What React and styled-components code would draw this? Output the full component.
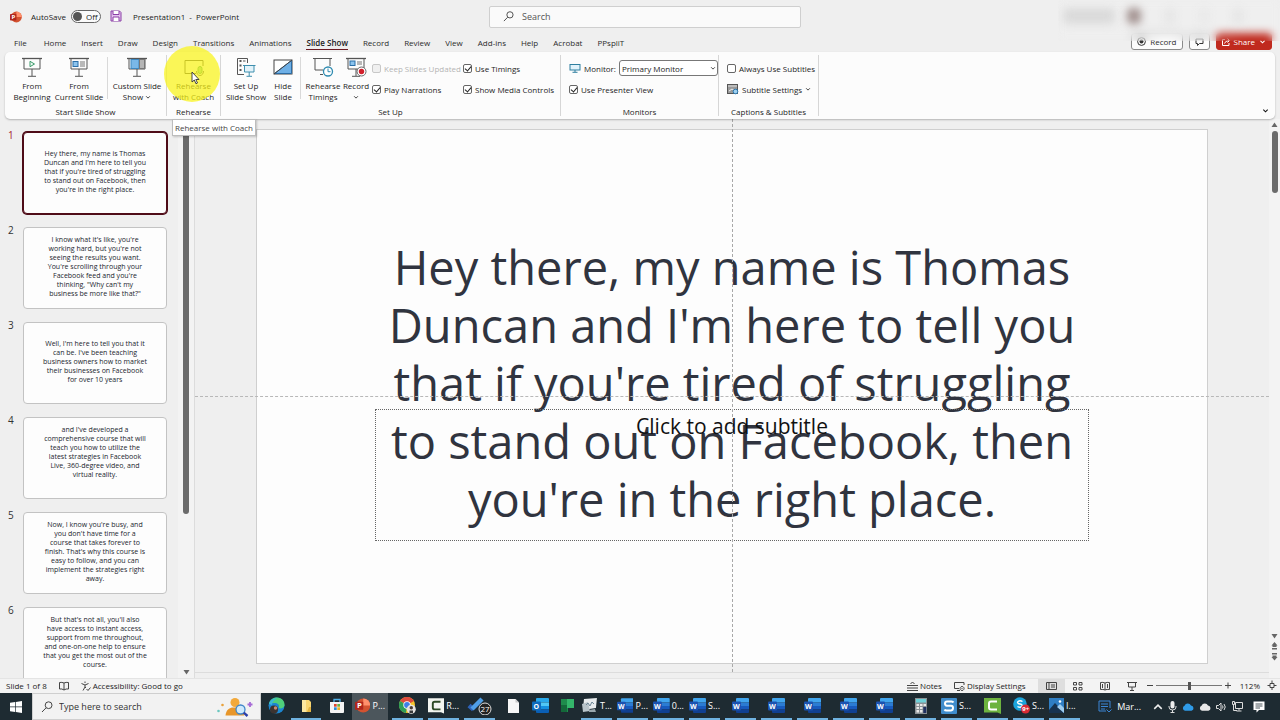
import React from 'react';
import styled, { createGlobalStyle, css } from 'styled-components';

const GlobalStyle = createGlobalStyle`
*{
  box-sizing: border-box;
}
body{
  margin: 0;
  background-color: #efefef;
}
button, input, select{
  font-family: inherit;
  font-size: inherit;
  color: inherit;
}
button{
  border: none;
  background: none;
  padding: 0;
}
`

const Window = styled.div`
height: 100vh;
display: flex;
flex-direction: column;
overflow: hidden;
position: relative;
font-family: "Open Sans", "Noto Sans", sans-serif;
font-size: 8px;
line-height: 11px;
color: #1c1c1c;
background-color: #efefef;
white-space: nowrap;
`

/* title bar */

const TitleBar = styled.header`
flex: none;
height: 33px;
padding-left: 10px;
display: grid;
grid-template-columns: 1fr minmax(120px, 312px) 1fr;
align-items: center;
`

const TitleLeft = styled.div`
display: flex;
align-items: center;
gap: 9px;
`

const AutoSave = styled.div`
display: flex;
align-items: center;
gap: 5px;
`

const Toggle = styled.button`
display: flex;
align-items: center;
gap: 4px;
width: 30px;
height: 13px;
padding: 0 1px;
border: 1px solid #666;
border-radius: 7px;
background-color: #fbfbfb;

&::before{
  content: "";
  width: 9px;
  height: 9px;
  border-radius: 50%;
  background-color: #555;
}
`

const DocTitle = styled.h1`
margin: 0 0 0 2px;
font-size: 8px;
font-weight: 400;
white-space: pre;
`

const SearchBox = styled.label`
display: flex;
align-items: center;
gap: 8px;
height: 22px;
padding-left: 13px;
border: 1px solid #cfcfcf;
border-radius: 2px;
background-color: #fafafa;
font-size: 9px;

input{
  flex: 1;
  min-width: 0;
  border: none;
  outline: none;
  background: none;
  padding: 0;
}
input::placeholder{
  color: #555;
}
`

const Veil = styled.div`
position: absolute;
top: 0;
right: 0;
width: 222px;
height: 41px;
padding: 8px 10px 0 5px;
display: flex;
gap: 24px;
backdrop-filter: blur(4px);
overflow: hidden;
z-index: 2;
`

const Smudge = styled.span`
width: ${(p) => p.$w}px;
height: 16px;
margin-left: ${(p) => (p.$near ? -12 : 0)}px;
border-radius: 5px;
background-color: ${(p) => p.$color};
filter: blur(4px);
`

/* tabs */

const TabRow = styled.div`
flex: none;
height: 19px;
padding: 0 8px 0 14px;
display: flex;
align-items: flex-start;
justify-content: space-between;
`

const Tabs = styled.nav`
display: flex;
gap: 15px;
padding-top: 4px;
`

const Tab = styled.a`
padding-bottom: 1px;
color: #2b2b2b;
text-decoration: none;
border-bottom: 1px solid transparent;

&:first-child{
  margin-right: 2px;
}

${(p) => p.$active && css`
  color: #222;
  font-weight: 600;
  border-color: #6b1a22;
`}
`

const TabActions = styled.div`
display: flex;
gap: 6px;
`

const ActionButton = styled.button`
display: flex;
align-items: center;
justify-content: center;
gap: 4px;
height: 17px;
padding: 0 5px;
border: 1px solid ${(p) => (p.$red ? '#c02a1e' : '#8a8a8a')};
border-radius: 3px;
background-color: ${(p) => (p.$red ? '#c02a1e' : '#fcfcfc')};
color: ${(p) => (p.$red ? '#fff' : '#2b2b2b')};
`

/* ribbon */

const Ribbon = styled.section`
flex: none;
position: relative;
height: 67px;
margin: 0 5px;
padding-top: 3px;
display: flex;
border-radius: 5px;
background-color: #fcfcfc;
box-shadow: 0 1px 2px rgba(0, 0, 0, 0.25);
z-index: 1;
`

const Group = styled.div`
flex: none;
width: ${(p) => p.$w}px;
height: 61px;
display: flex;
flex-direction: column;
border-right: 1px solid #d6d6d6;
`

const GroupBody = styled.div`
flex: 1;
display: flex;
align-items: flex-start;
justify-content: ${(p) => (p.$center ? 'center' : 'flex-start')};
gap: 5px;
padding: 2px 0 0 ${(p) => p.$pad || 0}px;
`

const GroupLabel = styled.div`
text-align: center;
line-height: 9px;
`

const Separator = styled.span`
width: 1px;
height: 42px;
background-color: #d9d9d9;
`

const BigButton = styled.button`
flex: none;
position: relative;
width: ${(p) => p.$w}px;
display: flex;
flex-direction: column;
align-items: center;
gap: 3px;
line-height: 11px;
text-align: center;
`

const Caption = styled.span`
display: flex;
flex-direction: column;
align-items: center;
`

const Spot = styled.span`
position: absolute;
left: 50%;
top: -11px;
width: 56px;
height: 56px;
margin-left: -30px;
border-radius: 50%;
background-color: rgba(249, 244, 24, 0.72);
`

const Pointer = styled.svg`
position: absolute;
left: 50%;
top: 14px;
margin-left: -3px;
`

const Tooltip = styled.div`
position: absolute;
left: 167px;
top: 67px;
padding: 2px 2px;
border: 1px solid #bdbdbd;
background-color: #fff;
color: #444;
box-shadow: 1px 1px 2px rgba(0, 0, 0, 0.2);
`

const Fields = styled.div`
display: grid;
grid-template-columns: ${(p) => p.$cols || 'auto'};
grid-auto-rows: 16px;
row-gap: 5px;
column-gap: 5px;
align-items: center;
padding-top: 3px;
`

const CheckLabel = styled.label`
display: flex;
align-items: center;
gap: 3px;
color: ${(p) => (p.$off ? '#b4b4b4' : '#1c1c1c')};
`

const Tick = styled.input`
appearance: none;
flex: none;
position: relative;
width: 9px;
height: 9px;
margin: 0;
border: 1px solid #666;
border-radius: 2px;
background-color: #fff;

&:checked::after{
  content: "";
  position: absolute;
  left: 2px;
  top: 0;
  width: 3px;
  height: 5px;
  border: solid #222;
  border-width: 0 1px 1px 0;
  transform: rotate(40deg);
}
&:disabled{
  border-color: #c8c8c8;
  background-color: #f0f0f0;
}
`

const SelectWrap = styled.span`
position: relative;
display: flex;
align-items: center;

svg{
  position: absolute;
  right: 2px;
  pointer-events: none;
}
`

const Select = styled.select`
appearance: none;
width: 99px;
height: 16px;
padding: 0 10px 0 2px;
border: 1px solid #777;
border-radius: 3px;
background-color: #fff;
`

const TextButton = styled.button`
display: flex;
align-items: center;
gap: 3px;
`

const Collapse = styled.button`
margin-left: auto;
align-self: flex-end;
padding: 0 6px 3px 0;
`

/* body */

const Main = styled.main`
flex: 1;
min-height: 0;
display: flex;
`

const SidePane = styled.aside`
flex: none;
width: 195px;
display: flex;
border-right: 1px solid #dcdcdc;
`

const Thumbs = styled.ol`
flex: 1;
margin: 0;
padding: 13px 0 0 8px;
display: flex;
flex-direction: column;
gap: 13px;
list-style: none;
overflow: hidden;
`

const ThumbItem = styled.li`
flex: none;
display: flex;
gap: 7px;
font-size: 10px;
color: ${(p) => (p.$active ? '#a4262c' : '#333')};

span{
  width: 8px;
  line-height: 7px;
}
`

const Thumb = styled.div`
width: 144px;
height: 82px;
padding-bottom: ${(p) => (p.$raised ? 12 : 3)}px;
display: flex;
flex-direction: column;
justify-content: center;
border-radius: 4px;
border: 1px solid #c3c3c3;
background-color: #fdfdfd;
font-size: 7px;
line-height: 9px;
text-align: center;
color: #22252e;

${(p) => p.$active && css`
  border-color: #4f0c18;
  box-shadow: 0 0 0 1px #4f0c18;
`}
`

const Scroll = styled.div`
flex: none;
width: ${(p) => p.$w}px;
padding: ${(p) => p.$top}px 0 ${(p) => p.$bottom}px;
display: flex;
flex-direction: column;
align-items: center;
gap: 3px;
background-color: #f3f3f3;

i{
  width: 6px;
  height: ${(p) => p.$len};
  margin-bottom: auto;
  border-radius: 3px;
  background-color: #6b6b6b;
}
`

const Stage = styled.section`
flex: 1;
min-width: 0;
position: relative;
padding: 10px 61px 8px;
display: flex;
border-bottom: 1px solid #dcdcdc;
margin-bottom: 5px;
`

const Slide = styled.article`
flex: 1;
position: relative;
padding-top: 108px;
border: 1px solid #cfcfcf;
background-color: #fdfdfd;
`

const SlideTitle = styled.h2`
margin: 0;
display: flex;
flex-direction: column;
align-items: center;
font-size: 47px;
line-height: 58px;
font-weight: 400;
color: #30343f;
`

const Subtitle = styled.div`
position: absolute;
left: 12.4%;
right: 12.4%;
top: 279px;
height: 132px;
padding-top: 4px;
border: 1px dotted #666;
font-size: 21px;
line-height: 25px;
text-align: center;
color: #111;
`

const GuideV = styled.div`
position: absolute;
left: 50%;
top: 0;
bottom: 0;
border-left: 1px dashed #a8a8a8;
`

const GuideH = styled.div`
position: absolute;
left: 0;
right: 0;
top: 50%;
border-top: 1px dashed #b8b8b8;
`

/* status bar */

const StatusBar = styled.footer`
flex: none;
height: 15px;
padding: 0 3px 1px 6px;
display: flex;
align-items: center;
background-color: #f3f3f3;
border-top: 1px solid #e4e4e4;
`

const StatusItem = styled.button`
display: flex;
align-items: center;
gap: 2px;
margin-right: ${(p) => p.$gap || 12}px;
`

const ZoomLevel = styled(StatusItem)`
margin-left: 8px;
`

const Spacer = styled.span`
flex: 1;
`

const ViewButton = styled.button`
width: 27px;
height: 14px;
display: flex;
align-items: center;
justify-content: center;
background-color: ${(p) => (p.$active ? '#dedede' : 'transparent')};
`

const Zoom = styled.input`
appearance: none;
width: 66px;
height: 10px;
margin: 0 2px;
background: linear-gradient(#777, #777) center / 100% 1px no-repeat;

&::-webkit-slider-thumb{
  appearance: none;
  width: 3px;
  height: 8px;
  background-color: #555;
}
`

/* taskbar */

const Taskbar = styled.footer`
flex: none;
height: 27px;
display: flex;
background-color: #1e2b32;
color: #fff;
font-size: 9px;
`

const Start = styled.button`
width: 32px;
display: flex;
align-items: center;
justify-content: center;
`

const TaskSearch = styled.label`
width: 229px;
padding: 0 6px 0 8px;
display: flex;
align-items: center;
gap: 6px;
border: 1px solid #cfcfcf;
background-color: #f2f2f2;

input{
  flex: 1;
  min-width: 0;
  border: none;
  outline: none;
  padding: 0;
  background: none;
}
input::placeholder{
  color: #333;
}
`

const Task = styled.button`
width: ${(p) => p.$w || 31}px;
margin-right: ${(p) => (p.$active ? 4 : p.$w ? 0 : 5)}px;
display: flex;
align-items: center;
justify-content: ${(p) => (p.$text ? 'flex-start' : 'center')};
gap: 2px;
border-bottom: 2px solid ${(p) => (p.$open ? '#6fb2e0' : 'transparent')};
background-color: ${(p) => (p.$active ? '#4c565c' : 'transparent')};
padding: 0 ${(p) => (p.$active ? 3 : 0)}px;
`

const Tray = styled.div`
margin-left: auto;
padding-right: 15px;
display: flex;
align-items: center;
gap: 5px;

b{
  font-weight: 400;
  margin-right: 7px;
}
svg:last-child{
  margin-left: 5px;
}
`

/* icons */

const Chevron = ({ size = 7, color = '#333', up }) => (
  <svg width={size} height={size} viewBox="0 0 8 8" fill="none" stroke={color} strokeWidth="1.2">
    <path d={up ? 'M1 5.5 4 2.5 7 5.5' : 'M1.5 3 4 5.5 6.5 3'} />
  </svg>
)

const Glass = ({ size = 11 }) => (
  <svg width={size} height={size} viewBox="0 0 12 12" fill="none" stroke="#444" strokeWidth="1">
    <circle cx="7.6" cy="4.2" r="3.4" />
    <path d="M5.1 6.8 1 11" />
  </svg>
)

const Screen = ({ children }) => (
  <svg width="22" height="20" viewBox="0 0 22 20" fill="none" stroke="#555">
    <path d="M1 1.5H21" strokeWidth="1.3" />
    <path d="M3 2V12H19V2M11 12V19M7 19.3H15" />
    {children}
  </svg>
)

const FromStart = () => (
  <Screen><path d="M9 4.3V9.7L13.5 7Z" stroke="#3a9a6a" fill="#eef9f2" /></Screen>
)

const FromCurrent = () => (
  <Screen>
    <rect x="5" y="4.5" width="5" height="5" fill="#8cc4ee" stroke="#2b6fa8" />
    <path d="M12 5H17M12 7H17M12 9H17" stroke="#777" />
  </Screen>
)

const CustomShow = () => (
  <Screen>
    <rect x="5" y="2.5" width="8" height="9" fill="#7ab8e8" stroke="#3d87c0" />
    <rect x="13.5" y="2.5" width="5" height="9" fill="#b5b5b5" stroke="#777" />
  </Screen>
)

const Coach = () => (
  <svg width="22" height="20" viewBox="0 0 22 20" fill="none" stroke="#444">
    <path d="M13 16.5H2V3.5H20V9" />
    <rect x="15" y="9.5" width="4" height="7" rx="2" fill="#8fd0a0" stroke="#3a9a6a" />
    <path d="M13.5 14C13.5 20 20.5 20 20.5 14" stroke="#555" />
  </svg>
)

const SetUp = () => (
  <svg width="20" height="20" viewBox="0 0 20 20" fill="none" stroke="#555">
    <path d="M8 17.5H1.5V1.5H11.5V6" />
    <path d="M3.5 4H5.5M3.5 8.5H5.5M3.5 13H5.5" strokeWidth="2" />
    <path d="M7 4H9.5" />
    <path d="M8.500 8.500V15H18V8.500Z" fill="#e3f3fa" stroke="none" />
    <path d="M7 8.5H19.500M8.500 8.500V15H18V8.500M13.200 15V19M10.500 19.300H16" stroke="#3f8fae" />
  </svg>
)

const Hide = () => (
  <svg width="20" height="20" viewBox="0 0 20 20">
    <rect x="1" y="3" width="18" height="14" fill="#fff" stroke="#444" />
    <path d="M18.5 3.5V16.5H1.5Z" fill="#6fb0e6" stroke="#2d6ca3" />
    <path d="M1 17 19 3" stroke="#444" />
  </svg>
)

const Timings = () => (
  <svg width="22" height="20" viewBox="0 0 22 20" fill="none" stroke="#555">
    <path d="M1 1.5H20M3 2V13H11M18 2V9M8 17.5H11" />
    <circle cx="16" cy="14.5" r="4.5" fill="#fff" stroke="#2f8bb0" strokeWidth="1.3" />
    <path d="M16 11.5V14.7H18.5" stroke="#2f8bb0" />
  </svg>
)

const RecordShow = () => (
  <Screen>
    <rect x="5" y="4" width="5" height="4.5" fill="#8cc4ee" stroke="#2b6fa8" />
    <path d="M12 5H17M12 7H17" stroke="#777" />
    <circle cx="16.5" cy="14.5" r="4.5" fill="#fff" stroke="#666" />
    <circle cx="16.5" cy="14.5" r="2.7" fill="#d21f2b" stroke="none" />
  </Screen>
)

const MonitorIcon = () => (
  <svg width="12" height="10" viewBox="0 0 11 10" fill="#e2f3fb" stroke="#2f7f9f">
    <rect x=".5" y="1.5" width="10" height="5.5" />
    <path d="M5.5 7V9M3 9.3H8" />
  </svg>
)

const SubtitleIcon = () => (
  <svg width="12" height="11" viewBox="0 0 12 11">
    <rect x=".5" y=".5" width="10" height="9" fill="#9a9a9a" stroke="#555" />
    <path d="M1 2H10" stroke="#ddd" />
    <path d="M2 7 5 5 8 7" stroke="#eee" fill="none" />
    <circle cx="8.5" cy="7.5" r="2.3" fill="#9fd0f0" stroke="#2a78b0" />
  </svg>
)

const PptLogo = ({ size = 12 }) => (
  <svg width={size} height={size} viewBox="0 0 16 16">
    <circle cx="8.5" cy="8" r="7.3" fill="#d35230" />
    <path d="M8.5 .7A7.3 7.3 0 0 1 15.8 8H8.5Z" fill="#ff8f6b" />
    <rect x="0" y="4" width="8.5" height="8.5" rx="1" fill="#b0261c" />
    <text x="2" y="11" fontSize="8" fontWeight="700" fill="#fff">P</text>
  </svg>
)

const Save = () => (
  <svg width="12" height="12" viewBox="0 0 12 12" fill="none" stroke="#8a3fa6">
    <path d="M1 1H9.5L11 2.5V11H1Z" fill="#e4c4ee" />
    <path d="M3 1V4.5H9V1M3 11V7H9V11" fill="#fff" />
  </svg>
)

const Tri = ({ up, stem }) => (
  <svg width="7" height={stem ? 8 : 6} viewBox={stem ? '0 0 7 8' : '0 0 7 6'} fill="#666">
    {stem
      ? <path d={up ? 'M3.5 0 6.5 3.5H5.5V5H1.5V3.500H.5ZM1 6H6V7.500H1Z' : 'M1 0H6V1.500H1ZM1.500 2.500H5.500V4H6.500L3.500 7.500.5 4H1.500Z'} />
      : <path d={up ? 'M3.5 .5 6.5 5H.5Z' : 'M3.5 5.5 6.5 1H.5Z'} />}
  </svg>
)

const WinLogo = () => (
  <svg width="12" height="12" viewBox="0 0 12 12" fill="#fff">
    <path d="M0 1.7 5.2 1V5.6H0ZM5.9 .9 12 0V5.6H5.9ZM0 6.3H5.2V11L0 10.3ZM5.9 6.3H12V12L5.9 11.1Z" />
  </svg>
)

const SearchBuddy = () => (
  <svg width="38" height="20" viewBox="0 0 38 20">
    <circle cx="19" cy="5.5" r="4.5" fill="#f2a93b" />
    <path d="M9.5 18.5C10 12.5 14 10.5 17 10.5H21C25 11 28 13 28 18.5Z" fill="#e8962a" />
    <circle cx="24.5" cy="12.5" r="4.5" fill="#cfeafc" stroke="#3f86c9" strokeWidth="1.3" />
    <path d="M27.7 15.7 31.5 19" stroke="#2b3fa8" strokeWidth="2.4" />
    <path d="M34 5V10M31.500 7.500H36.500" stroke="#a76bd6" strokeWidth="1.8" />
    <circle cx="6.5" cy="8" r="1.3" fill="#e9a13b" />
    <circle cx="2.5" cy="14" r="1.3" fill="#6bc7c0" />
  </svg>
)

const Edge = () => (
  <svg width="17" height="17" viewBox="0 0 17 17">
    <circle cx="8.5" cy="8.5" r="8" fill="#1c86d1" />
    <path d="M1 7C2 2 6 .5 9 .5C14 .7 17 4.5 16.5 8.5C16 11.5 12 12 10.5 11C12 8.5 10 6 7 6C4 6 2 6.5 1 7Z" fill="#4fcf7b" />
    <path d="M1 7C2.5 2.5 6 1 9 1.5C6 3 4 5 4 8Z" fill="#39b8d8" />
    <circle cx="6" cy="12.5" r="4" fill="#3c3330" />
    <circle cx="7.5" cy="11" r="1.7" fill="#c58a70" />
  </svg>
)

const Folder = () => (
  <svg width="11" height="14" viewBox="0 0 11 14">
    <path d="M1 1H8L10 3V13H1Z" fill="#f7d572" />
    <path d="M1 1H5V13H1Z" fill="#fbe7a1" />
    <path d="M8 8H10V13H6Z" fill="#e3b341" />
  </svg>
)

const Store = () => (
  <svg width="16" height="16" viewBox="0 0 16 16">
    <path d="M5 4V1.5H11V4" fill="none" stroke="#4fb0e8" strokeWidth="1.3" />
    <path d="M1 4H15V14Q15 15 14 15H2Q1 15 1 14Z" fill="#f4f4f4" />
    <path d="M5 6H7.7V8.7H5Z" fill="#e0452c" />
    <path d="M8.3 6H11V8.7H8.3Z" fill="#6cb33f" />
    <path d="M5 9.3H7.7V12H5Z" fill="#2a8fd8" />
    <path d="M8.3 9.3H11V12H8.3Z" fill="#f0b323" />
  </svg>
)

const Chrome = () => (
  <svg width="17" height="17" viewBox="0 0 17 17">
    <circle cx="8" cy="8" r="8" fill="#f7c52b" />
    <path d="M8 8 1 4A8 8 0 0 1 15 4Z" fill="#dd4b3e" />
    <path d="M8 8 1 4A8 8 0 0 0 7 16Z" fill="#2f9e57" />
    <circle cx="8" cy="8" r="3.7" fill="#fff" />
    <circle cx="8" cy="8" r="2.9" fill="#3f7fe8" />
    <circle cx="12.3" cy="12.3" r="4.5" fill="#e6e3e0" />
    <circle cx="12.3" cy="10.7" r="1.7" fill="#4a3a33" />
    <path d="M10.5 16V13.5H14V16Z" fill="#3a3a3a" />
  </svg>
)

const Camtasia = ({ green }) => (
  <svg width="17" height="16" viewBox="0 0 17 16">
    <path d="M0 0H17V16L13.5 14.5H0Z" fill={green ? '#6db33f' : '#f3f5f0'} />
    <path d="M12 4.5V3.5H7Q5 3.5 5 5.5V9.5Q5 11.5 7 11.5H12V10.5" fill="none" stroke={green ? '#fff' : '#2d4a24'} strokeWidth="2" />
  </svg>
)

const Todo = () => (
  <svg width="25" height="18" viewBox="0 0 25 18">
    <path d="M2 8.5 6.5 12.5" stroke="#2d62b8" strokeWidth="4.5" />
    <path d="M5 12 15 2" stroke="#4f9fe8" strokeWidth="4.5" />
    <circle cx="18" cy="12" r="6" fill="#222" stroke="#ddd" />
    <text x="13.5" y="15" fontSize="8" fill="#fff">27</text>
  </svg>
)

const FileIcon = () => (
  <svg width="11" height="14" viewBox="0 0 11 14">
    <path d="M0 0H7.5L11 3.5V14H0Z" fill="#f7f7f7" />
    <path d="M7.5 0V3.5H11Z" fill="#c8c8c8" />
  </svg>
)

const OfficeTile = ({ letter }) => (
  <svg width="17" height="16" viewBox="0 0 17 16">
    <path d="M4 1Q4 0 5 0H16Q17 0 17 1V4.5H4Z" fill={letter === 'O' ? '#28a8ea' : '#41a5ee'} />
    <path d="M4 4.5H17V8H4Z" fill={letter === 'O' ? '#50c8f5' : '#2b7cd3'} />
    <path d="M4 8H17V11.5H4Z" fill={letter === 'O' ? '#1490df' : '#185abd'} />
    <path d="M4 11.5H17V14Q17 15 16 15H5Q4 15 4 14Z" fill={letter === 'O' ? '#0a5fb5' : '#103f91'} />
    <rect x="0" y="3.5" width="9" height="9" rx="1" fill={letter === 'O' ? '#0f6cbd' : '#1b52b0'} />
    <text x={letter === 'O' ? 1.5 : 1} y="10.7" fontSize="7" fontWeight="700" fill="#fff">{letter}</text>
  </svg>
)

const Planner = () => (
  <svg width="13" height="14" viewBox="0 0 13 14">
    <path d="M0 0H7V13H0Z" fill="#1f8b4c" />
    <path d="M6 0H13V9H6Z" fill="#34b56a" />
    <path d="M0 6H6V13H0Z" fill="#14683a" />
  </svg>
)

const Tasks = () => (
  <svg width="17" height="15" viewBox="0 0 17 15">
    <path d="M3 1 16 0 15 10 2 12Z" fill="#e8ecee" />
    <path d="M1 6 7 4 9 13 2 14Z" fill="#b8c4ca" />
    <path d="M5 7 7 5 9 8 11 4 13 6" fill="none" stroke="#6b8696" />
    <path d="M8 12 14 11 15 14H8Z" fill="#9aa7ad" />
  </svg>
)

const Calculator = () => (
  <svg width="12" height="16" viewBox="0 0 12 16">
    <rect width="12" height="16" fill="#8b9296" />
    <rect x="1" y="1" width="10" height="3.5" fill="#6fd0d8" />
    <path d="M1.5 6H4V8H1.5ZM5 6H7.5V8H5ZM8.5 6H11V8H8.5ZM1.5 9H4V11H1.5ZM5 9H7.5V11H5ZM1.5 12H4V14.5H1.5ZM5 12H7.5V14.5H5Z" fill="#e8e8e8" />
    <rect x="8.3" y="9" width="3" height="6" fill="#1f3060" />
  </svg>
)

const Snagit = () => (
  <svg width="16" height="16" viewBox="0 0 16 16">
    <rect width="16" height="16" rx="1" fill="#3f8ccc" />
    <path d="M12.5 4.5Q12 3.5 10.5 3.5H6Q4 3.5 4 5.5T6 7.8H10Q12 7.8 12 10T10 12.5H5.5Q4 12.5 3.5 11.5" fill="none" stroke="#fff" strokeWidth="2" />
  </svg>
)

const Skype = () => (
  <svg width="17" height="17" viewBox="0 0 17 17">
    <circle cx="7" cy="7" r="6.8" fill="#1ba5dc" />
    <path d="M9.5 4.5Q7 3 5 4.5C3.8 6 5.5 7 7 7S10 8.5 9 9.7Q7 11 4.5 9.5" fill="none" stroke="#fff" strokeWidth="1.4" />
    <circle cx="12.5" cy="12" r="4.5" fill="#d92b35" />
    <text x="9.3" y="14.5" fontSize="6" fontWeight="700" fill="#fff">9+</text>
  </svg>
)

const Photos = () => (
  <svg width="15" height="15" viewBox="0 0 15 15">
    <rect width="15" height="15" fill="#2f7ec4" />
    <path d="M0 12 6 5 15 15H0Z" fill="#17324f" />
    <path d="M8 9 11 6 15 10V15Z" fill="#9dccf0" />
    <circle cx="11" cy="3.5" r="1.3" fill="#fff" />
  </svg>
)

const News = () => (
  <svg width="14" height="13" viewBox="0 0 14 13" fill="none" stroke="#3b86d6">
    <path d="M1 1H12V8M8 11H1V1M3 4H10M3 6.5H10M3 9H7" />
    <path d="M8.5 9.5 11 12 13.5 9.5" />
  </svg>
)

const Mic = () => (
  <svg width="9" height="12" viewBox="0 0 9 12">
    <rect x="2.5" y="0" width="4" height="7.5" rx="2" fill="#eee" />
    <path d="M1 5V6Q1 9 4.5 9T8 6V5M4.5 9V11.5M2.5 11.5H6.5" fill="none" stroke="#ddd" />
  </svg>
)

const Cloud = ({ color }) => (
  <svg width="12" height="8" viewBox="0 0 12 8">
    <path d="M3 7.8A2.7 2.7 0 0 1 2.5 2.7A3.6 3.6 0 0 1 9 2.5A2.7 2.7 0 0 1 9.5 7.8Z" fill={color} />
  </svg>
)

const Speaker = () => (
  <svg width="11" height="10" viewBox="0 0 11 10" fill="none" stroke="#ddd">
    <path d="M.5 3.5H2.5L5 1V9L2.5 6.5H.5ZM6.5 3.5Q7.5 5 6.5 6.5M8 2Q10.5 5 8 8" />
  </svg>
)

const Network = () => (
  <svg width="11" height="11" viewBox="0 0 11 11" fill="none" stroke="#ddd">
    <path d="M3.5 1.5H10.5V7.5H3.5ZM7 7.5V9.5M4.5 10H9.5M.5 .5H2.5V3.5H.5ZM1.5 3.5V9.5H5" />
  </svg>
)

const Notice = () => (
  <svg width="12" height="12" viewBox="0 0 12 12">
    <path d="M.5 .5H11.5V9H6L3.5 11.5V9H.5Z" fill="#fff" />
    <path d="M2.5 3H9.5M2.5 5H9.5M2.5 7H7" stroke="#1e2b32" strokeWidth=".8" />
  </svg>
)

const LineIcon = ({ w = 10, d }) => (
  <svg width={w} height="10" viewBox={`0 0 ${w} 10`} fill="none" stroke="#444">
    <path d={d} />
  </svg>
)

/* data */

const tabs = ['File', 'Home', 'Insert', 'Draw', 'Design', 'Transitions', 'Animations', 'Slide Show', 'Record', 'Review', 'View', 'Add-ins', 'Help', 'Acrobat', 'PPspliT'];

const title = ['Hey there, my name is Thomas', "Duncan and I'm here to tell you", "that if you're tired of struggling", 'to stand out on Facebook, then', "you're in the right place."];

const slides = [
  { lines: title },
  { lines: ["I know what it's like, you're", "working hard, but you're not", 'seeing the results you want.', "You're scrolling through your", "Facebook feed and you're", 'thinking, "Why can\'t my', 'business be more like that?"'] },
  { lines: ["Well, I'm here to tell you that it", "can be. I've been teaching", 'business owners how to market', 'their businesses on Facebook', 'for over 10 years'] },
  { raised: true, lines: ["and I've developed a", 'comprehensive course that will', 'teach you how to utilize the', 'latest strategies in Facebook', 'Live, 360-degree video, and', 'virtual reality.'] },
  { lines: ["Now, I know you're busy, and", "you don't have time for a", 'course that takes forever to', "finish. That's why this course is", 'easy to follow, and you can', 'implement the strategies right', 'away.'] },
  { raised: true, lines: ["But that's not all, you'll also", 'have access to instant access,', 'support from me throughout,', 'and one-on-one help to ensure', 'that you get the most out of the', 'course.'] },
];

const tasks = [
  { name: 'Edge', icon: <Edge />, w: 30 },
  { name: 'File Explorer', icon: <Folder />, w: 30, open: true },
  { name: 'Store', icon: <Store />, w: 31 },
  { name: 'PowerPoint', icon: <PptLogo size={17} />, w: 36, text: 'P...', active: true },
  { name: 'Chrome', icon: <Chrome />, open: true },
  { name: 'Camtasia Recorder', icon: <Camtasia />, text: 'R...', open: true },
  { name: 'To Do', icon: <Todo />, open: true },
  { name: 'Document', icon: <FileIcon />, w: 27 },
  { name: 'Outlook', icon: <OfficeTile letter="O" />, w: 27 },
  { name: 'Planner', icon: <Planner />, w: 27 },
  { name: 'Tasks', icon: <Tasks />, text: 'T...', open: true },
  { name: 'Word 1', icon: <OfficeTile letter="W" />, text: 'P...', open: true },
  { name: 'Word 2', icon: <OfficeTile letter="W" />, text: '0...', open: true },
  { name: 'Word 3', icon: <OfficeTile letter="W" />, text: 'S...', open: true },
  { name: 'Word 4', icon: <OfficeTile letter="W" />, open: true },
  { name: 'Word 5', icon: <OfficeTile letter="W" />, open: true },
  { name: 'Word 6', icon: <OfficeTile letter="W" />, open: true },
  { name: 'Word 7', icon: <OfficeTile letter="W" />, open: true },
  { name: 'Word 8', icon: <OfficeTile letter="W" />, open: true },
  { name: 'Calculator', icon: <Calculator />, open: true },
  { name: 'Snagit', icon: <Snagit />, text: 'S...', open: true },
  { name: 'Camtasia', icon: <Camtasia green />, open: true },
  { name: 'Skype', icon: <Skype />, text: 'S...', open: true },
  { name: 'Photos', icon: <Photos />, text: 'I...', open: true },
];

const Check = ({ label, on, off }) => (
  <CheckLabel $off={off}>
    <Tick type="checkbox" defaultChecked={on} disabled={off} />
    {label}
  </CheckLabel>
)

const Big = ({ icon, top, bottom, w, children }) => (
  <BigButton $w={w}>
    {icon}
    <Caption>
      <span>{top}</span>
      <span>{bottom}</span>
    </Caption>
    {children}
  </BigButton>
)

const App = () => {
  return (
    <Window>
      <GlobalStyle />
      <TitleBar>
        <TitleLeft>
          <PptLogo />
          <AutoSave>
            AutoSave
            <Toggle aria-label="AutoSave">Off</Toggle>
          </AutoSave>
          <button aria-label="Save"><Save /></button>
          <DocTitle>{'Presentation1  -  PowerPoint'}</DocTitle>
        </TitleLeft>
        <SearchBox>
          <Glass />
          <input type="text" placeholder="Search" aria-label="Search" />
        </SearchBox>
      </TitleBar>
      <Veil>
        <Smudge $w={52} $color="#dadada" />
        <Smudge $w={14} $color="#a08f8d" $near />
        <Smudge $w={10} $color="#e4e4e4" />
        <Smudge $w={10} $color="#e8e8e8" />
        <Smudge $w={10} $color="#e4e4e4" />
      </Veil>
      <TabRow>
        <Tabs>
          {tabs.map((t) => (
            <Tab key={t} href="#" $active={t === 'Slide Show'}>{t}</Tab>
          ))}
        </Tabs>
        <TabActions>
          <ActionButton>
            <svg width="9" height="9" viewBox="0 0 9 9"><circle cx="4.5" cy="4.5" r="3.9" fill="none" stroke="#333" /><circle cx="4.5" cy="4.5" r="2" fill="#333" /></svg>
            Record
          </ActionButton>
          <ActionButton aria-label="Comments">
            <svg width="9" height="8" viewBox="0 0 8 8" fill="none" stroke="#333"><path d="M.5 1H7.5V5.5H4L2 7.5V5.5H.5Z" /></svg>
          </ActionButton>
          <ActionButton $red>
            <svg width="8" height="8" viewBox="0 0 8 8" fill="none" stroke="#fff"><path d="M3 1.5H.5V7.5H7V5M2.5 5.5Q3 3 7 2.5M5.5 .5 7.5 2.5 5.5 4.5" /></svg>
            Share
            <Chevron color="#fff" />
          </ActionButton>
        </TabActions>
      </TabRow>

      <Ribbon>
        <Group $w={162}>
          <GroupBody $pad={8}>
            <Big icon={<FromStart />} top="From" bottom="Beginning" w={38} />
            <Big icon={<FromCurrent />} top="From" bottom="Current Slide" w={46} />
            <Separator />
            <Big icon={<CustomShow />} top="Custom Slide" bottom={<>Show <Chevron size={6} /></>} w={48} />
          </GroupBody>
          <GroupLabel>Start Slide Show</GroupLabel>
        </Group>
        <Group $w={54}>
          <GroupBody $center>
            <Big icon={<Coach />} top="Rehearse" bottom="with Coach" w={46}>
              <Spot />
              <Pointer width="9" height="14" viewBox="0 0 9 14">
                <path d="M1 1V11L3.3 9 5 12.8 6.5 12 4.8 8.5H8Z" fill="#fff" stroke="#333" strokeWidth=".9" />
              </Pointer>
            </Big>
          </GroupBody>
          <GroupLabel>Rehearse</GroupLabel>
        </Group>
        <Group $w={340}>
          <GroupBody $pad={5}>
            <Big icon={<SetUp />} top="Set Up" bottom="Slide Show" w={40} />
            <Big icon={<Hide />} top="Hide" bottom="Slide" w={24} />
            <Separator />
            <Big icon={<Timings />} top="Rehearse" bottom="Timings" w={34} />
            <Big icon={<RecordShow />} top="Record" bottom={<Chevron size={6} />} w={22} />
            <Fields $cols="86px auto">
              <Check label="Keep Slides Updated" off />
              <Check label="Use Timings" on />
              <Check label="Play Narrations" on />
              <Check label="Show Media Controls" on />
            </Fields>
          </GroupBody>
          <GroupLabel>Set Up</GroupLabel>
        </Group>
        <Group $w={158}>
          <GroupBody $pad={8}>
            <Fields>
              <CheckLabel>
                <MonitorIcon />
                Monitor:
                <SelectWrap>
                  <Select defaultValue="Primary Monitor">
                    <option>Primary Monitor</option>
                  </Select>
                  <Chevron size={6} />
                </SelectWrap>
              </CheckLabel>
              <Check label="Use Presenter View" on />
            </Fields>
          </GroupBody>
          <GroupLabel>Monitors</GroupLabel>
        </Group>
        <Group $w={100}>
          <GroupBody $pad={8}>
            <Fields>
              <Check label="Always Use Subtitles" />
              <TextButton>
                <SubtitleIcon />
                Subtitle Settings
                <Chevron size={6} />
              </TextButton>
            </Fields>
          </GroupBody>
          <GroupLabel>Captions &amp; Subtitles</GroupLabel>
        </Group>
        <Collapse aria-label="Collapse ribbon"><Chevron color="#111" /></Collapse>
        <Tooltip>Rehearse with Coach</Tooltip>
      </Ribbon>

      <Main>
        <SidePane>
          <Thumbs>
            {slides.map((s, i) => (
              <ThumbItem key={i} $active={i === 0}>
                <span>{i + 1}</span>
                <Thumb $active={i === 0} $raised={s.raised}>
                  {s.lines.map((l) => <div key={l}>{l}</div>)}
                </Thumb>
              </ThumbItem>
            ))}
          </Thumbs>
          <Scroll $w={16} $top={11} $bottom={3} $len="384px">
            <i />
            <Tri />
          </Scroll>
        </SidePane>
        <Stage>
          <Slide>
            <SlideTitle>
              {title.map((l) => <span key={l}>{l}</span>)}
            </SlideTitle>
            <Subtitle>Click to add subtitle</Subtitle>
          </Slide>
          <GuideV />
          <GuideH />
        </Stage>
        <Scroll $w={11} $top={3} $bottom={17} $len="62px">
          <Tri up />
          <i />
          <Tri />
          <Tri up stem />
          <Tri stem />
        </Scroll>
      </Main>

      <StatusBar>
        <StatusItem>Slide 1 of 8</StatusItem>
        <StatusItem aria-label="Spelling"><LineIcon d="M5 2V9M5 2Q3 1 .5 1.5V8Q3 7.5 5 9Q7 7.5 9.5 8V1.5Q7 1 5 2" /></StatusItem>
        <StatusItem><LineIcon d="M.5 2.5 4 4 7.5 2.5M4 4V6L2 9.5M4 6 5 7M5.5 8 7 9.5 9.5 6.5M4 .5V2" />Accessibility: Good to go</StatusItem>
        <Spacer />
        <StatusItem><LineIcon w={11} d="M0 4.5H11M0 7H11M0 9.5H11M3.5 3 5.5 1 7.5 3" />Notes</StatusItem>
        <StatusItem><LineIcon w={11} d="M5 7.5H.5V1.5H10V4M3 9.5H6M8 5.5A2 2 0 1 0 8.1 5.5M8 7V8" />Display Settings</StatusItem>
        <ViewButton $active aria-label="Normal"><LineIcon w={11} d="M.5 1.5H10.5V8.5H.5ZM3 1.5V8.5M5 4H9M5 6H9" /></ViewButton>
        <ViewButton aria-label="Slide sorter"><LineIcon d="M.5 1.5H3.5V4H.5ZM6 1.5H9V4H6ZM.5 6.5H3.5V9H.5ZM6 6.5H9V9H6Z" /></ViewButton>
        <ViewButton aria-label="Reading view"><LineIcon d="M5 2V9M5 2Q3 1 .5 1.5V8.5Q3 8 5 9Q7 8 9.5 8.5V1.5Q7 1 5 2M2.5 3V7M7.5 3V7" /></ViewButton>
        <ViewButton aria-label="Slide show"><LineIcon d="M0 1.5H10M1.5 1.5V6H8.5V1.5M5 6V9M3 9.5H7" /></ViewButton>
        <button aria-label="Zoom out"><LineIcon w={8} d="M1 5.5H7" /></button>
        <Zoom type="range" min="10" max="210" defaultValue="112" aria-label="Zoom" />
        <button aria-label="Zoom in"><LineIcon w={8} d="M1 5.5H7M4 2.5V8.5" /></button>
        <ZoomLevel $gap={7}>112%</ZoomLevel>
        <button aria-label="Fit to window"><LineIcon d="M3 3.5H7V7.5H3ZM5 .5V3.5M5 7.5V10M.5 5.5H3M7 5.5H9.5" /></button>
      </StatusBar>

      <Taskbar>
        <Start aria-label="Start"><WinLogo /></Start>
        <TaskSearch>
          <Glass size={12} />
          <input type="text" placeholder="Type here to search" aria-label="Type here to search" />
          <SearchBuddy />
        </TaskSearch>
        {tasks.map((t) => (
          <Task key={t.name} aria-label={t.name} $w={t.w} $text={t.text} $open={t.open} $active={t.active}>
            {t.icon}
            {t.text}
          </Task>
        ))}
        <Tray>
          <News />
          <b>Mar...</b>
          <Chevron size={10} color="#eee" up />
          <Mic />
          <Cloud color="#2f9be8" />
          <Cloud color="#e8e8e8" />
          <Speaker />
          <Network />
          <Notice />
        </Tray>
      </Taskbar>
    </Window>
  )
}

export default App
